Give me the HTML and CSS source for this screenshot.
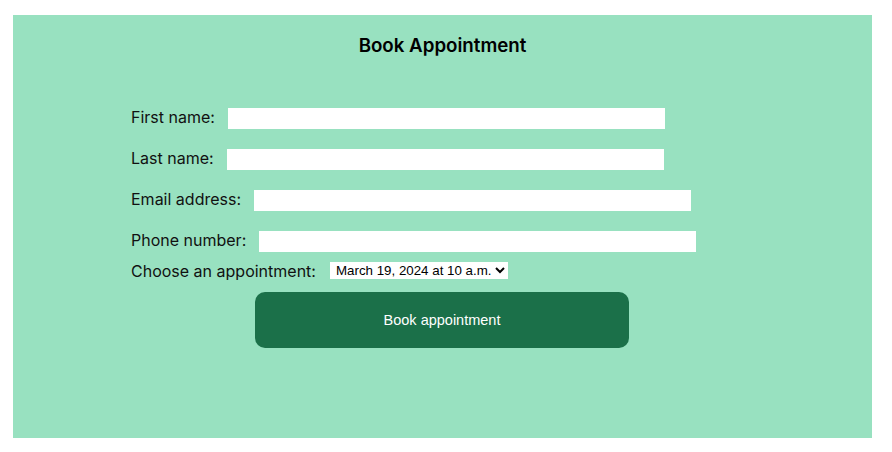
FILE: index.html
```html
<!DOCTYPE html>
<html lang="en">
<head>
<meta charset="utf-8">
<title>Book Appointment</title>
<link rel="stylesheet" href="styles.css">
</head>
<body>
<main class="panel">
  <h1 class="title">Book Appointment</h1>
  <form class="form">
    <div class="row row-first"><label for="fn">First name:</label><input id="fn" type="text"></div>
    <div class="row"><label for="ln">Last name:</label><input id="ln" type="text"></div>
    <div class="row"><label for="em">Email address:</label><input id="em" type="email"></div>
    <div class="row"><label for="ph">Phone number:</label><input id="ph" type="tel"></div>
    <div class="row row-select"><label for="ap">Choose an appointment:</label>
      <select id="ap"><option>March 19, 2024 at 10 a.m.</option></select>
    </div>
    <button type="button" class="submit">Book appointment</button>
  </form>
</main>
</body>
</html>
```
FILE: styles.css
```css
html, body {
  margin: 0;
  padding: 0;
  background: #ffffff;
}
body {
  padding: 15px 20px 14px 13px;
  font-family: Inter, "Noto Sans", sans-serif;
  color: #111111;
}
.panel {
  width: 859px;
  height: 423px;
  box-sizing: border-box;
  background: #98e1c0;
  padding-top: 20px;
  display: flex;
  flex-direction: column;
}
.title {
  margin: 0;
  font-size: 18.72px;
  line-height: 22px;
  font-weight: 600;
  text-align: center;
  color: #000;
}
.form {
  display: flex;
  flex-direction: column;
  margin-top: 51px;
}
.row {
  display: flex;
  align-items: center;
  height: 21px;
  margin-left: 118px;
  margin-top: 20px;
  font-size: 16px;
}
.row label {
  margin-bottom: 3px;
}
.row-first { margin-top: 0; }
.row input {
  margin: 0 0 0 13px;
  width: 437px;
  height: 21px;
  border: none;
  padding: 0;
  background: #fff;
  box-sizing: border-box;
}
.row-select {
  margin-top: 10px;
  height: 17px;
}
.row-select label {
  margin-bottom: 0;
}
.row-select select {
  margin-left: 14px;
  width: 178px;
  height: 17px;
  border: none;
  padding: 0 0 0 2px;
  background: #fff;
  font-family: "Liberation Sans", Arial, sans-serif;
  font-size: 13.33px;
  color: #000;
  border-radius: 0;
}
.submit {
  align-self: center;
  margin: 13px 1px 0 0;
  width: 374px;
  height: 56px;
  border: none;
  border-radius: 10px;
  background: #1b7049;
  color: #fff;
  font-family: "Liberation Sans", Arial, sans-serif;
  font-size: 14.5px;
}
```
